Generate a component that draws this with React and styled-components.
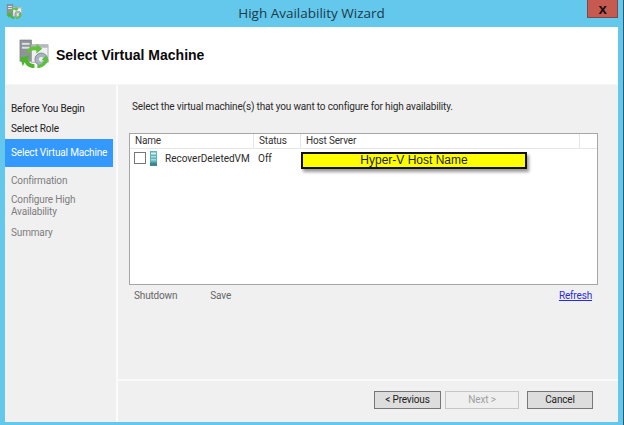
import React from 'react';
import styled, { createGlobalStyle } from 'styled-components';

const GlobalStyle = createGlobalStyle`
    html, body {
        margin: 0;
        padding: 0;
        background-color: #63c8ec;
    }
`;

const Wizard = styled.div`
    width: 624px;
    height: 425px;
    box-sizing: border-box;
    display: flex;
    flex-direction: column;
    background-color: #63c8ec;
    border-right: 1px solid #2f5a6c;
    font-family: Roboto, "Liberation Sans", sans-serif;
    font-size: 10px;
    letter-spacing: -0.16px;
    color: #222;
    overflow: hidden;
`;

const TitleBar = styled.div`
    height: 27px;
    flex: none;
    display: flex;
    align-items: flex-start;
    padding-left: 6px;
    position: relative;

    .title {
        flex: 1;
        text-align: center;
        font-family: "Open Sans", sans-serif;
        font-size: 13.5px;
        letter-spacing: 0;
        line-height: 26px;
        color: #1c3a48;
        padding-left: 14px;
    }

    svg {
        margin-top: 4px;
    }
`;

const CloseButton = styled.div`
    width: 31px;
    height: 18px;
    box-sizing: border-box;
    margin-right: 5px;
    display: flex;
    align-items: center;
    justify-content: center;
    background-color: #c75a50;
    border: 1px solid #7c4a46;
    border-top: none;
    font-family: "Liberation Sans", sans-serif;
    font-weight: bold;
    font-size: 15px;
    color: #111;
`;

const Body = styled.div`
    flex: 1;
    display: flex;
    flex-direction: column;
    margin: 0 5px 3px 5px;
    background-color: #f0f0f0;
    min-height: 0;
`;

const Banner = styled.div`
    height: 58px;
    flex: none;
    box-sizing: border-box;
    background-color: #fff;
    border-bottom: 1px solid #f6f6f6;
    display: flex;
    align-items: center;
    gap: 7px;
    padding: 0 0 2px 13px;

    h1 {
        margin: 0;
        font-family: "Liberation Sans", sans-serif;
        font-size: 14px;
        letter-spacing: 0;
        font-weight: bold;
        color: #0a0a0a;
    }
`;

const Columns = styled.div`
    flex: 1;
    display: flex;
    min-height: 0;
`;

const Steps = styled.div`
    width: 111px;
    flex: none;
    border-right: 2px solid #fbfbfb;
    padding-top: 14px;
`;

const Step = styled.div`
    box-sizing: border-box;
    width: 108px;
    padding: ${p => p.$active ? '7px 6px' : '3px 6px'};
    min-height: ${p => p.$active ? '28px' : '20px'};
    line-height: ${p => p.$wrap ? '12px' : '13px'};
    color: ${p => p.$active ? '#fff' : p.$muted ? '#7d7d7d' : '#222'};
    background-color: ${p => p.$active ? '#3399ff' : 'transparent'};
    margin-bottom: ${p => p.$gap || 0}px;
    white-space: ${p => p.$wrap ? 'normal' : 'nowrap'};
`;

const Main = styled.div`
    flex: 1;
    display: flex;
    flex-direction: column;
    min-width: 0;
`;

const Content = styled.div`
    flex: 1;
    padding: 15px 20px 0 11px;
    min-height: 0;

    p {
        margin: 0 0 19px 3px;
        line-height: 14px;
        color: #2a2a2a;
    }
`;

const VmList = styled.div`
    height: 152px;
    box-sizing: border-box;
    background-color: #fff;
    border: 1px solid #a3a7aa;
    position: relative;
`;

const ListRow = styled.div`
    display: grid;
    grid-template-columns: 124px 47px 279px;
    height: ${p => p.$head ? '14px' : '18px'};
    align-items: center;
    border-bottom: ${p => p.$head ? '1px solid #e4e6e8' : 'none'};
`;

const HeadCell = styled.div`
    height: 100%;
    box-sizing: border-box;
    padding-left: ${p => p.$pad || 5}px;
    line-height: 13px;
    border-right: 1px solid #e4e6e8;
    color: #333;
`;

const Cell = styled.div`
    display: flex;
    align-items: center;
    white-space: nowrap;
    padding-left: ${p => p.$pad || 0}px;
    letter-spacing: 0;
    color: #2a2a2a;

    svg {
        flex: none;
        margin-right: 8px;
    }
`;

const CheckBox = styled.span`
    width: 12px;
    height: 12px;
    box-sizing: border-box;
    flex: none;
    border: 1px solid #777;
    background-color: #fff;
    margin-right: 4px;
`;

const HostLabel = styled.div`
    position: absolute;
    left: 171px;
    top: 18px;
    width: 226px;
    height: 17px;
    box-sizing: border-box;
    background-color: #ffff00;
    border: 2px solid #111;
    box-shadow: 2px 3px 3px #00000066;
    font-family: "Liberation Sans", sans-serif;
    font-size: 12px;
    letter-spacing: 0;
    line-height: 13px;
    text-align: center;
    color: #222;
`;

const ListActions = styled.div`
    display: flex;
    padding: 4px 6px 0 5px;
    line-height: 14px;

    span {
        color: #666;
        margin-right: 33px;
    }

    a {
        margin-left: auto;
        color: #2a2ae0;
        text-decoration: underline;
    }
`;

const Footer = styled.div`
    height: 43px;
    flex: none;
    box-sizing: border-box;
    border-top: 2px solid #f9f9f9;
    display: flex;
    justify-content: flex-end;
    gap: 4px;
    padding: 10px 25px 0 0;
`;

const WizardButton = styled.div`
    width: ${p => p.$w}px;
    height: 18px;
    box-sizing: border-box;
    margin-left: ${p => p.$gap || 0}px;
    background-color: ${p => p.$disabled ? '#efefef' : '#dddddd'};
    border: 1px solid ${p => p.$disabled ? '#c6c6c6' : '#777'};
    color: ${p => p.$disabled ? '#a0a0a0' : '#222'};
    text-align: center;
    line-height: 16px;
`;

const WizardIcon = ({ size }) => (
    <svg width={size} height={size} viewBox="0 0 32 32">
        <rect x="2" y="1" width="12" height="22" fill="#8f9499" stroke="#6b7075" strokeWidth="0.5" />
        <rect x="4" y="4" width="8" height="2" fill="#dfe1e3" />
        <rect x="4" y="8" width="8" height="2" fill="#dfe1e3" />
        <rect x="14" y="6" width="17" height="18" fill="#eef0f1" stroke="#9a9fa3" strokeWidth="0.8" />
        <rect x="14" y="6" width="17" height="3" fill="#b4b9bd" />
        <circle cx="24" cy="21" r="6.5" fill="#aab4c0" stroke="#7f8a96" />
        <circle cx="24" cy="21" r="2.4" fill="#eef0f2" />
        <path d="M9 14 C10 9 14 7 19 8 L19 5 L25 10 L19 15 L19 12 C15 11 13 12 12 15 Z" fill="#63c23c" />
        <path d="M2 19 L12 17 L10 21 C11 24 13 26 17 26 L17 30 C11 30 8 27 7 24 L5 28 Z" fill="#4fb52e" />
        <path d="M20 30 L20 27 C23 27 26 25 27 22 L24 22 L29 17 L32 23 L30 23 C29 27 25 30 20 30 Z" fill="#5cc23a" />
    </svg>
);

const ServerIcon = () => (
    <svg width="7" height="15" viewBox="0 0 7 15">
        <rect width="7" height="15" fill="#5fb3bd" />
        <rect x="1" y="1.5" width="5" height="2" fill="#d5eef0" />
        <rect x="1" y="5" width="5" height="1.5" fill="#a8dce0" />
        <rect x="1" y="8" width="5" height="1.5" fill="#a8dce0" />
        <rect y="11.5" width="7" height="3.5" fill="#3b8894" />
    </svg>
);

const App = () => {
    return (
        <>
            <GlobalStyle />
            <Wizard>
                <TitleBar>
                    <WizardIcon size={16} />
                    <div className='title'>High Availability Wizard</div>
                    <CloseButton>x</CloseButton>
                </TitleBar>
                <Body>
                    <Banner>
                        <WizardIcon size={31} />
                        <h1>Select Virtual Machine</h1>
                    </Banner>
                    <Columns>
                        <Steps>
                            <Step>Before You Begin</Step>
                            <Step>Select Role</Step>
                            <Step $active $gap={4}>Select Virtual Machine</Step>
                            <Step $muted>Confirmation</Step>
                            <Step $muted $wrap $gap={2}>Configure High Availability</Step>
                            <Step $muted>Summary</Step>
                        </Steps>
                        <Main>
                            <Content>
                                <p>Select the virtual machine(s) that you want to configure for high availability.</p>
                                <VmList>
                                    <ListRow $head>
                                        <HeadCell>Name</HeadCell>
                                        <HeadCell $pad={5}>Status</HeadCell>
                                        <HeadCell $pad={5}>Host Server</HeadCell>
                                    </ListRow>
                                    <ListRow>
                                        <Cell $pad={4}>
                                            <CheckBox />
                                            <ServerIcon />
                                            <span>RecoverDeletedVM</span>
                                        </Cell>
                                        <Cell $pad={4}>Off</Cell>
                                        <Cell />
                                    </ListRow>
                                    <HostLabel>Hyper-V Host Name</HostLabel>
                                </VmList>
                                <ListActions>
                                    <span>Shutdown</span>
                                    <span>Save</span>
                                    <a>Refresh</a>
                                </ListActions>
                            </Content>
                            <Footer>
                                <WizardButton $w={67}>&lt; Previous</WizardButton>
                                <WizardButton $w={74} $disabled>Next &gt;</WizardButton>
                                <WizardButton $w={66} $gap={4}>Cancel</WizardButton>
                            </Footer>
                        </Main>
                    </Columns>
                </Body>
            </Wizard>
        </>
    )
}

export default App;
